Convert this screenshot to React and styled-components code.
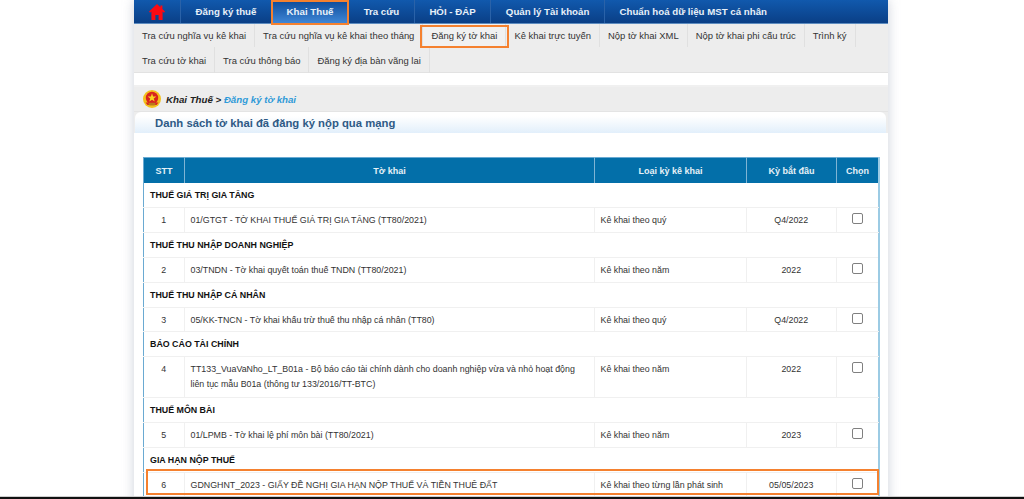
import React from "react";
import styled, { createGlobalStyle, css } from "styled-components";

const GlobalStyle = createGlobalStyle`
  html, body {
    margin: 0;
    padding: 0;
    background: #fff;
    overflow: hidden;
  }
  * {
    box-sizing: border-box;
  }
`;

const Screen = styled.div`
  width: 1024px;
  height: 499px;
  overflow: hidden;
  background: #fff;
  font-family: "Liberation Sans", Arial, sans-serif;
  border-bottom: 2px solid #111;
`;

const Viewport = styled.div`
  height: 497px;
  overflow: hidden;
  border-bottom: 1px solid #cfcfcf;
`;

const Wrapper = styled.div`
  width: 754px;
  margin-left: 134px;
  height: 520px;
  background: #fff;
  box-shadow: 0 0 11px rgba(130, 140, 165, 0.4);
`;

const TopNav = styled.nav`
  display: flex;
  height: 24px;
  background: linear-gradient(#1159ad, #0a3f86);
  border-bottom: 1px solid #5d8cc0;
`;

const TopItem = styled.a`
  display: flex;
  align-items: center;
  justify-content: center;
  padding: 0 14.6px;
  font-size: 9.7px;
  font-weight: bold;
  color: #e8f0f8;
  border-right: 1px solid #2a62a8;
  &:last-child {
    border-right: none;
  }
  ${(p) =>
    p.$active &&
    css`
      position: relative;
      background: linear-gradient(#0c4a98, #3f86d6);
      &::after {
        content: "";
        position: absolute;
        inset: 0 -1px -2px -1px;
        border: 2px solid #f5812f;
      }
    `}
`;

const HomeLink = styled(TopItem)`
  width: 47px;
  padding: 0;
`;

const SubNav = styled.div`
  display: flex;
  flex-wrap: wrap;
  align-content: flex-start;
  height: 49px;
  background: #ededed;
  border-bottom: 1px solid #e2e2e2;
`;

const SubItem = styled.a`
  display: flex;
  align-items: center;
  height: ${(p) => p.$h}px;
  padding: 0 8px;
  font-size: 9.45px;
  color: #333;
  border-right: 1px solid #e0e0e0;
  ${(p) =>
    p.$active &&
    css`
      position: relative;
      background: #f1f1f1;
      border-bottom: 1px solid #23508f;
      &::after {
        content: "";
        position: absolute;
        inset: 1px -4px -2px -3px;
        border: 2px solid #f5812f;
      }
    `}
`;

const Spacer = styled.div`
  height: 14px;
  border-bottom: 2px solid #f0f0f0;
`;

const Breadcrumb = styled.div`
  display: flex;
  align-items: center;
  gap: 5px;
  height: 25px;
  padding-left: 9px;
  background: #ededed;
  border-bottom: 1px solid #e4e4e4;
  font-size: 9.7px;
  font-style: italic;
  font-weight: bold;
  color: #222;
`;

const CrumbLink = styled.span`
  color: #2f9ad8;
`;

const Emblem = styled.svg`
  width: 18px;
  height: 18px;
  flex: none;
`;

const Panel = styled.div`
  padding: 0 2px 0 1px;
  background: #ededed;
`;

const Title = styled.h2`
  margin: 0;
  height: 21px;
  padding-left: 20px;
  display: flex;
  align-items: center;
  font-size: 11.3px;
  font-weight: bold;
  color: #2f5a86;
  background: linear-gradient(#fff 20%, #e2effb);
  border-radius: 6px 6px 0 0;
`;

const Body = styled.div`
  padding: 24px 10px 0 9px;
`;

const Table = styled.table`
  width: 735px;
  border-collapse: collapse;
  table-layout: fixed;
  border-top: 1px solid #6aaad2;
  border-left: 1px solid #6aaad2;
  border-right: 2px solid #9ccbe4;
  font-size: 8.85px;
  color: #333;
`;

const Head = styled.th`
  height: 25.5px;
  padding: 0;
  background: #036fa9;
  color: #e6f1f7;
  font-size: 9px;
  font-weight: bold;
  text-align: center;
  border-right: 1px solid #7fb4d4;
`;

const GroupCell = styled.td`
  height: 24.83px;
  padding: 0 0 0 6px;
  font-size: 8.85px;
  font-weight: bold;
  color: #111;
  border-bottom: 1px solid #f0f0f0;
`;

const Cell = styled.td`
  height: ${(p) => p.$h}px;
  padding: 5px 6px 0 5.5px;
  line-height: 15px;
  vertical-align: top;
  text-align: ${(p) => (p.$center ? "center" : "left")};
  border-right: 1px solid #f0f0f0;
  border-bottom: 1px solid #f0f0f0;
`;

const Row = styled.tr`
  ${(p) =>
    p.$marked &&
    css`
      position: relative;
      &::after {
        content: "";
        position: absolute;
        left: 2px;
        right: 0;
        top: -3px;
        bottom: 2px;
        border: 2px solid #f5812f;
        pointer-events: none;
      }
    `}
`;

const CheckBox = styled.span`
  display: block;
  width: 11px;
  height: 11px;
  margin: 0 auto;
  background: #fff;
  border: 1px solid #808080;
  border-radius: 2px;
`;

const topItems = [
  ["Đăng ký thuế"],
  ["Khai Thuế", true],
  ["Tra cứu"],
  ["HỎI - ĐÁP"],
  ["Quản lý Tài khoản"],
  ["Chuẩn hoá dữ liệu MST cá nhân"],
];

const subItems = [
  ["Tra cứu nghĩa vụ kê khai"],
  ["Tra cứu nghĩa vụ kê khai theo tháng"],
  ["Đăng ký tờ khai", true],
  ["Kê khai trực tuyến"],
  ["Nộp tờ khai XML"],
  ["Nộp tờ khai phi cấu trúc"],
  ["Trình ký"],
  ["Tra cứu tờ khai"],
  ["Tra cứu thông báo"],
  ["Đăng ký địa bàn vãng lai"],
];

const groups = [
  {
    name: "THUẾ GIÁ TRỊ GIA TĂNG",
    stt: 1,
    form: "01/GTGT - TỜ KHAI THUẾ GIÁ TRỊ GIA TĂNG (TT80/2021)",
    period: "Kê khai theo quý",
    start: "Q4/2022",
  },
  {
    name: "THUẾ THU NHẬP DOANH NGHIỆP",
    stt: 2,
    form: "03/TNDN - Tờ khai quyết toán thuế TNDN (TT80/2021)",
    period: "Kê khai theo năm",
    start: "2022",
  },
  {
    name: "THUẾ THU NHẬP CÁ NHÂN",
    stt: 3,
    form: "05/KK-TNCN - Tờ khai khấu trừ thuế thu nhập cá nhân (TT80)",
    period: "Kê khai theo quý",
    start: "Q4/2022",
  },
  {
    name: "BÁO CÁO TÀI CHÍNH",
    stt: 4,
    form: "TT133_VuaVaNho_LT_B01a - Bộ báo cáo tài chính dành cho doanh nghiệp vừa và nhỏ hoạt động liên tục mẫu B01a (thông tư 133/2016/TT-BTC)",
    period: "Kê khai theo năm",
    start: "2022",
    height: 41,
  },
  {
    name: "THUẾ MÔN BÀI",
    stt: 5,
    form: "01/LPMB - Tờ khai lệ phí môn bài (TT80/2021)",
    period: "Kê khai theo năm",
    start: "2023",
  },
  {
    name: "GIA HẠN NỘP THUẾ",
    stt: 6,
    form: "GDNGHNT_2023 - GIẤY ĐỀ NGHỊ GIA HẠN NỘP THUẾ VÀ TIỀN THUÊ ĐẤT",
    period: "Kê khai theo từng lần phát sinh",
    start: "05/05/2023",
    marked: true,
  },
];

const HomeIcon = () => (
  <svg width="18" height="18" viewBox="0 0 18 18" aria-hidden="true">
    <path
      fill="#fb0a12"
      d="M9 1 1 8.6l1 1.1 1.4-1.2V17h4v-5h3.2v5h4V8.5l1.4 1.2 1-1.1-2.6-2.5V2.4h-2v1.9z"
    />
  </svg>
);

const StateEmblem = () => (
  <Emblem viewBox="0 0 18 18" aria-hidden="true">
    <circle cx="9" cy="9" r="9" fill="#f3c11c" />
    <circle cx="9" cy="8" r="6.2" fill="#d8231f" />
    <path
      fill="#f7d620"
      d="m9 3.2 1.1 3.2h3.3l-2.7 2 1 3.2L9 9.7l-2.7 1.9 1-3.2-2.7-2h3.3z"
    />
    <path fill="#d8231f" d="M2.5 12.5h3l1 2.5h-2zM15.5 12.5h-3l-1 2.5h2z" />
    <rect x="5.5" y="12.8" width="7" height="2.6" rx="1.3" fill="#b9791a" />
  </Emblem>
);

const App = () => (
  <Screen>
    <GlobalStyle />
    <Viewport>
      <Wrapper>
        <TopNav>
          <HomeLink>
            <HomeIcon />
          </HomeLink>
          {topItems.map(([label, active]) => (
            <TopItem key={label} $active={active}>
              {label}
            </TopItem>
          ))}
        </TopNav>
        <SubNav>
          {subItems.map(([label, active], i) => (
            <SubItem key={label} $active={active} $h={i > 6 ? 26 : 23}>
              {label}
            </SubItem>
          ))}
        </SubNav>
        <Spacer />
        <Breadcrumb>
          <StateEmblem />
          <span>
            Khai Thuế &gt; <CrumbLink>Đăng ký tờ khai</CrumbLink>
          </span>
        </Breadcrumb>
        <Panel>
          <Title>Danh sách tờ khai đã đăng ký nộp qua mạng</Title>
        </Panel>
        <Body>
          <Table>
            <colgroup>
              <col width="41" />
              <col width="410" />
              <col width="152" />
              <col width="90" />
              <col width="42" />
            </colgroup>
            <thead>
              <tr>
                <Head>STT</Head>
                <Head>Tờ khai</Head>
                <Head>Loại kỳ kê khai</Head>
                <Head>Kỳ bắt đầu</Head>
                <Head>Chọn</Head>
              </tr>
            </thead>
            <tbody>
              {groups.map((g) => {
                const h = g.height || 24.83;
                return (
                  <React.Fragment key={g.stt}>
                    <tr>
                      <GroupCell colSpan={5}>{g.name}</GroupCell>
                    </tr>
                    <Row $marked={g.marked}>
                      <Cell $center $h={h}>
                        {g.stt}
                      </Cell>
                      <Cell $h={h}>{g.form}</Cell>
                      <Cell $h={h}>{g.period}</Cell>
                      <Cell $center $h={h}>
                        {g.start}
                      </Cell>
                      <Cell $center $h={h}>
                        <CheckBox />
                      </Cell>
                    </Row>
                  </React.Fragment>
                );
              })}
            </tbody>
          </Table>
        </Body>
      </Wrapper>
    </Viewport>
  </Screen>
);

export default App;
